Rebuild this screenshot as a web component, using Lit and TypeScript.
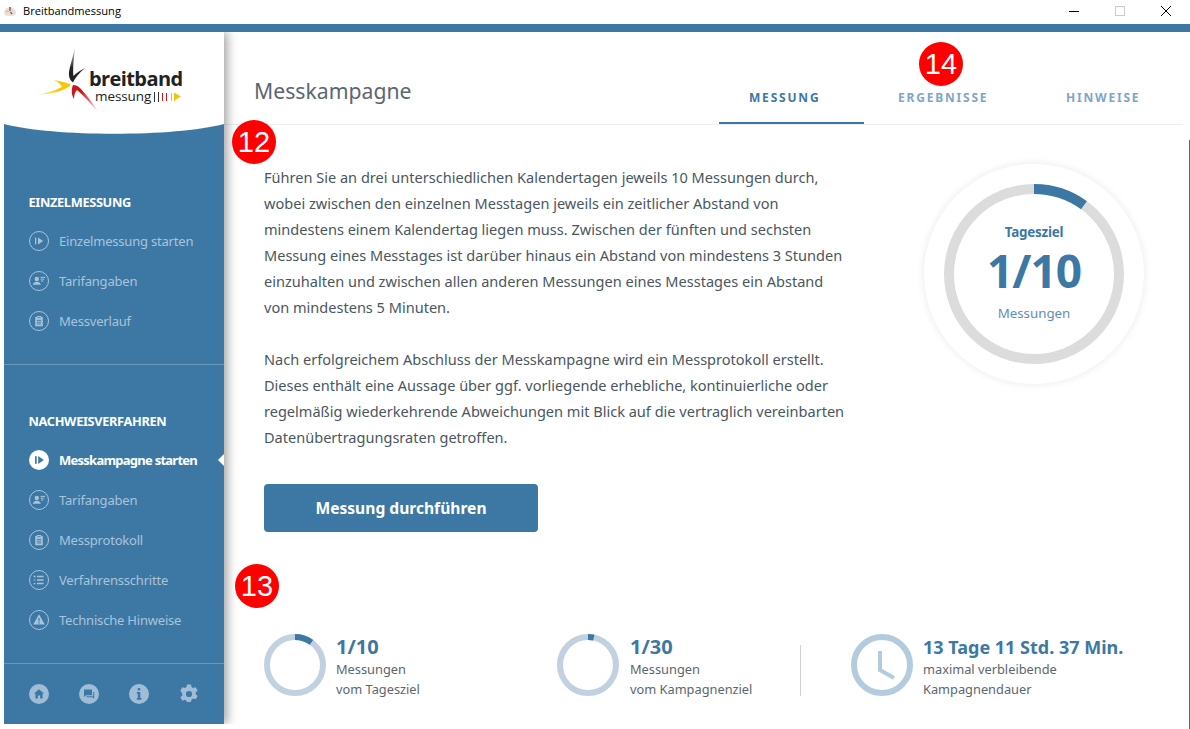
import { LitElement, html, css, svg } from "lit";
import { customElement } from "lit/decorators.js";

const BLUE = "#3d78a5";

function arcPath(cx: number, cy: number, r: number, deg: number) {
  const a = (deg * Math.PI) / 180;
  const x = cx + r * Math.sin(a);
  const y = cy - r * Math.cos(a);
  return `M${cx} ${cy - r}A${r} ${r} 0 0 1 ${x.toFixed(2)} ${y.toFixed(2)}`;
}

const iconPlay = (active = false) => html`<svg class="ico" viewBox="0 0 20 20">
  ${active
    ? svg`<circle cx="10" cy="10" r="10" fill="#fff"/><rect x="6" y="6.2" width="1.7" height="7.6" fill="${BLUE}"/><path d="M9.2 6l5.6 4-5.6 4z" fill="${BLUE}"/>`
    : svg`<circle cx="10" cy="10" r="9.5" fill="none" stroke="#a9c4da" stroke-width="1"/><rect x="6" y="6.6" width="1.3" height="6.8" fill="#a9c4da"/><path d="M9 6.4l5.2 3.6L9 13.6z" fill="#a9c4da"/>`}
</svg>`;

const iconPerson = html`<svg class="ico" viewBox="0 0 20 20">
  <circle cx="10" cy="10" r="9.5" fill="none" stroke="#a9c4da" stroke-width="1"/>
  <circle cx="7.8" cy="8" r="2.2" fill="#a9c4da"/>
  <path d="M3.8 13.8c.4-2 2-3 4-3s3.6 1 4 3z" fill="#a9c4da"/>
  <path d="M11.6 6.4h4.6M11.6 8.2h3.6M12 10h2.4" stroke="#a9c4da" stroke-width="1" fill="none"/>
</svg>`;

const iconClip = html`<svg class="ico" viewBox="0 0 20 20">
  <circle cx="10" cy="10" r="9.5" fill="none" stroke="#a9c4da" stroke-width="1"/>
  <path d="M6.2 6h1.6V5h4.4v1h1.6v9.2H6.2z" fill="#a9c4da"/>
  <path d="M7.8 9.4h4.4M7.8 11.2h4.4M7.8 13h4.4" stroke="${BLUE}" stroke-width=".9"/>
  <path d="M8.4 6.6h3.2" stroke="${BLUE}" stroke-width=".8"/>
</svg>`;

const iconList = html`<svg class="ico" viewBox="0 0 20 20">
  <circle cx="10" cy="10" r="9.5" fill="none" stroke="#a9c4da" stroke-width="1"/>
  <path d="M8 6.4h6.6M8 10h6.6M8 13.6h6.6" stroke="#a9c4da" stroke-width="1.5"/>
  <circle cx="5.6" cy="6.4" r="1" fill="#a9c4da"/>
  <path d="M4.7 9.4h1.7v1.2H4.7zM4.7 13h1.7v1.2H4.7z" fill="#a9c4da"/>
</svg>`;

const iconWarn = html`<svg class="ico" viewBox="0 0 20 20">
  <circle cx="10" cy="10" r="9.5" fill="none" stroke="#a9c4da" stroke-width="1"/>
  <path d="M10 4.2l5.8 10.4H4.2z" fill="#a9c4da"/>
  <path d="M9.3 8h1.4l-.2 3.6h-1zM9.3 12.2h1.4v1.3H9.3z" fill="${BLUE}"/>
</svg>`;

const footHome = html`<svg class="fico" viewBox="0 0 20 20">
  <circle cx="10" cy="10" r="10" fill="#9fbdd6"/>
  <path d="M10 5.2l5 4.4h-1.4v5h-2.5v-3H8.9v3H6.400v-5H5z" fill="${BLUE}"/>
</svg>`;
const footChat = html`<svg class="fico" viewBox="0 0 20 20">
  <circle cx="10" cy="10" r="10" fill="#9fbdd6"/>
  <path d="M5 5.4h8v5.8H7L5 13z" fill="${BLUE}"/>
  <path d="M14.2 8h1v6.8l-1.8-1.6H7.6v-1h6.6z" fill="${BLUE}"/>
</svg>`;
const footInfo = html`<svg class="fico" viewBox="0 0 20 20">
  <circle cx="10" cy="10" r="10" fill="#9fbdd6"/>
  <rect x="8.7" y="4" width="2.6" height="2.6" rx=".6" fill="${BLUE}"/>
  <path d="M7.8 8h3.500v6h1.100v1.800H7.800V14h1V9.800h-1z" fill="${BLUE}"/>
</svg>`;
const footGear = html`<svg class="fico" viewBox="0 0 24 24">
  <path fill-rule="evenodd" fill="#9fbdd6" d="M9.600 0.600h4.800l.6 3.100c.7.3 1.400.6 2 1.100l3-1 2.400 4.100-2.400 2.100c.1.7.1 1.500 0 2.200l2.400 2.100-2.400 4.100-3-1c-.6.5-1.300.8-2 1.100l-.6 3.100H9.600L9 20.100c-.7-.3-1.400-.6-2-1.100l-3 1-2.400-4.100 2.400-2.100c-.1-.7-.1-1.500 0-2.200L1.600 7.900 4 3.800l3 1c.6-.5 1.300-.8 2-1.100zM12 8.300a3.700 3.700 0 1 0 0 7.400 3.700 3.700 0 0 0 0-7.400z"/>
</svg>`;

@customElement("app-root")
export class AppRoot extends LitElement {
  static styles = css`
    :host {
      display: block;
      width: 1190px;
      height: 729px;
      background: #fff;
      overflow: hidden;
      font-family: "Noto Sans", "Open Sans", sans-serif;
      position: relative;
    }
    .titlebar {
      height: 24px;
      display: flex;
      align-items: center;
      background: #fff;
    }
    .appicon { width: 14px; height: 14px; margin: 0 0 3px 3px; }
    .apptitle {
      margin: 0 0 3px 6px;
      font: 11.100px "Open Sans", sans-serif;
      color: #000;
    }
    .winctl { margin-left: auto; display: flex; height: 24px; }
    .winctl svg { display: block; }
    .band { height: 8px; background: #3d78a5; }
    .app { display: flex; height: 692px; padding-left: 4px; }
    .side {
      width: 220px;
      flex: none;
      background: #3d78a5;
      display: flex;
      flex-direction: column;
      box-shadow: 3px 0 10px rgba(0, 0, 0, 0.38);
      clip-path: inset(0 -20px 0 0);
      position: relative;
      z-index: 2;
    }
    .logo {
      height: 92px;
      background: #fff;
      position: relative;
    }
    .curve { display: block; width: 220px; height: 11px; }
    .section { padding-left: 25px; }
    .s1 { height: 230px; padding-top: 57px; box-sizing: border-box; border-bottom: 1px solid #6a97ba; }
    .s2 { height: 299px; padding-top: 46px; box-sizing: border-box; border-bottom: 1px solid #6a97ba; }
    .shead {
      color: #fff;
      font-weight: 700;
      font-size: 12.800px;
      line-height: 20px;
      letter-spacing: -0.35px;
      margin-bottom: 9px;
      margin-left: -0.5px;
    }
    .item {
      height: 40px;
      display: flex;
      align-items: center;
      gap: 10px;
      color: #a9c4da;
      font-size: 13px;
      letter-spacing: -0.2px;
      position: relative;
    }
    .item.active { color: #fff; font-weight: 700; letter-spacing: -0.75px; }
    .item.active::after {
      content: "";
      position: absolute;
      right: 0;
      top: 14px;
      border: 6px solid transparent;
      border-left-width: 0;
      border-right: 6px solid #fff;
    }
    .ico { width: 20px; height: 20px; flex: none; }
    .foot {
      display: flex;
      gap: 30px;
      padding: 20px 0 0 25px;
    }
    .fico { width: 20px; height: 20px; display: block; }
    .main { flex: 1; min-width: 0; }
    .head {
      height: 93px;
      width: 959px;
      box-sizing: border-box;
      padding-left: 30px;
      display: flex;
      align-items: flex-end;
      border-bottom: 1px solid #eceff1;
    }
    .head h1 {
      flex: 1;
      margin: 0 0 17px;
      font-size: 21.200px;
      font-weight: 400;
      line-height: 32px;
      color: #5b6670;
    }
    .tabs {
      flex: none;
      display: grid;
      grid-template-columns: 145px 164px 147px;
      column-gap: 4px;
    }
    .tab {
      height: 50px;
      box-sizing: border-box;
      padding: 15px 0 0 30px;
      font-size: 12px;
      font-weight: 700;
      letter-spacing: 1.800px;
      line-height: 18px;
      color: #7ea6c6;
      border-bottom: 2px solid transparent;
      white-space: nowrap;
    }
    .tab.on { color: #3d78a5; border-bottom-color: #3d78a5; }
    .body {
      display: flex;
      justify-content: space-between;
      padding: 39px 0 0 40px;
      height: 509px;
      box-sizing: border-box;
    }
    .text p {
      margin: 0 0 25px;
      font-size: 14.550px;
      line-height: 26.100px;
      color: #4a5660;
      white-space: nowrap;
    }
    .btn {
      margin-top: 34px;
      width: 274px;
      height: 48px;
      border-radius: 4px;
      background: #3d78a5;
      color: #fff;
      font-weight: 700;
      font-size: 15.600px;
      display: flex;
      align-items: center;
      justify-content: center;
    }
    .goal {
      flex: none;
      width: 220px;
      height: 220px;
      box-sizing: border-box;
      padding-top: 2px;
      margin: 0 46px 0 0;
      border-radius: 50%;
      box-shadow: 0 0 8px rgba(0, 0, 0, 0.09);
      display: flex;
      flex-direction: column;
      align-items: center;
      justify-content: center;
      position: relative;
    }
    .goal svg { position: absolute; inset: 20px; width: 180px; height: 180px; }
    .g1 { font-size: 13.400px; font-weight: 700; color: #3d78a5; line-height: 20px; letter-spacing: -0.2px; }
    .g2 { font-size: 46px; font-weight: 700; color: #3d78a5; line-height: 56px; letter-spacing: -1px; }
    .g3 { font-size: 13.300px; color: #5f90b8; line-height: 30px; }
    .stats {
      padding-left: 40px;
      display: grid;
      grid-template-columns: 293px 243px 51px auto;
    }
    .stat { display: flex; gap: 10px; height: 62px; }
    .stat.mid { gap: 11px; }
    .stat svg { width: 62px; height: 62px; flex: none; }
    .num {
      font-size: 18px;
      font-weight: 700;
      color: #3d78a5;
      line-height: 20px;
      margin: 3px 0 2px;
      white-space: nowrap;
    }
    .num.big { font-size: 20px; }
    .lbl {
      font-size: 12.800px;
      color: #5b6670;
      line-height: 20px;
      white-space: nowrap;
    }
    .sep { width: 1px; height: 51px; background: #cfd3d6; margin-top: 11px; }
    .edge {
      position: absolute;
      right: 0;
      top: 140px;
      bottom: 0;
      width: 1px;
      background: #666;
    }
    .marker {
      position: absolute;
      width: 44px;
      height: 44px;
      border-radius: 50%;
      background: #ff0000;
      color: #fff;
      font: 29px/44px "Liberation Sans", Arial, sans-serif;
      text-align: center;
      z-index: 5;
    }
    .m12 { left: 232px; top: 120px; }
    .m13 { left: 235px; top: 564px; }
    .m14 { left: 919px; top: 42px; }
    .brand {
      position: absolute;
      left: 85px;
      top: 37px;
      font: 700 20px/20px "Open Sans", sans-serif;
      color: #222;
      letter-spacing: -0.6px;
    }
    .brand2 {
      position: absolute;
      left: 91px;
      top: 57px;
      font: 400 13.500px/14px "Open Sans", sans-serif;
      color: #222;
      letter-spacing: -0.1px;
    }
    .logomark { position: absolute; left: 0; top: 0; width: 220px; height: 92px; }
  `;

  render() {
    const ringSm = (deg: number) => html`<svg viewBox="0 0 62 62">
      <circle cx="31" cy="31" r="28" fill="none" stroke="#c1d1df" stroke-width="6"/>
      <path d="${arcPath(31, 31, 28, deg)}" fill="none" stroke="#3d78a5" stroke-width="6"/>
    </svg>`;
    return html`
      <div class="titlebar">
        <svg class="appicon" viewBox="0 0 14 14">
          <path d="M1 9a6 6 0 0 1 12 0c0 2-2 3-6 3s-6-1-6-3z" fill="#e4e0da"/>
          <path d="M7 3v4" stroke="#333" stroke-width="1"/>
          <path d="M3 7.500h3" stroke="#f4c20d" stroke-width="1.200"/>
          <path d="M7.500 8l1.500 2" stroke="#c8171d" stroke-width="1.200"/>
        </svg>
        <span class="apptitle">Breitbandmessung</span>
        <div class="winctl">
          <svg width="130" height="24" viewBox="0 0 130 24">
            <path d="M9 11.500h10" stroke="#000" stroke-width="1"/>
            <rect x="55.500" y="6.500" width="9" height="9" fill="none" stroke="#ccc"/>
            <path d="M101 6l10 10M111 6l-10 10" stroke="#000" stroke-width="1" fill="none"/>
          </svg>
        </div>
      </div>
      <div class="band"></div>
      <div class="app">
        <aside class="side">
          <div class="logo">
            <svg class="logomark" viewBox="0 0 220 92">
              <defs>
                <linearGradient id="gk" x1="0" y1="0" x2="0" y2="1"><stop offset="0" stop-color="#ddd"/><stop offset="0.6" stop-color="#222"/></linearGradient>
                <linearGradient id="gy" x1="0" y1="0" x2="1" y2="0"><stop offset="0" stop-color="#fff3b0"/><stop offset="0.7" stop-color="#fbc400"/></linearGradient>
                <linearGradient id="gr" x1="1" y1="1" x2="0" y2="0"><stop offset="0" stop-color="#fbe0e0"/><stop offset="0.7" stop-color="#c8171d"/></linearGradient>
              </defs>
              <path d="M71 15C69 25 66 33 65 40C64.500 45 66 48 69 50.500C71 46 75 41 81 36C76 39 72 41 69.500 44C68.500 38 70 25 71 15z" fill="url(#gk)"/>
              <path d="M33 63C45 62 58 60 66 54L66 52C61 50 55 49 50 48C54 50 57 52 58 55C50 59 42 61 33 63z" fill="url(#gy)"/>
              <path d="M69 53C67 58 67.500 63 70 67C70 63 71 60 73 58C80 64 87 72 94 80C88 70 82 62 76 56C74 54 72 53 69 53z" fill="url(#gr)"/>
              <path d="M150.500 60v10M154.500 60v10" stroke="#333" stroke-width="1"/>
              <path d="M158.500 61v8M162.500 61v8" stroke="#c8171d" stroke-width="1"/>
              <path d="M167.500 61v8M170.500 61v8" stroke="#f4c20d" stroke-width="1"/>
              <path d="M171 61l6 3.500-6 3.500z" fill="#f4c20d"/>
            </svg>
            <div class="brand">breitband</div>
            <div class="brand2">messung</div>
          </div>
          <svg class="curve" viewBox="0 0 220 11" preserveAspectRatio="none"><path d="M0 0h220C170 13 50 13 0 0z" fill="#fff"/></svg>
          <div class="section s1">
            <div class="shead">EINZELMESSUNG</div>
            <div class="item">${iconPlay()}<span>Einzelmessung starten</span></div>
            <div class="item">${iconPerson}<span>Tarifangaben</span></div>
            <div class="item">${iconClip}<span>Messverlauf</span></div>
          </div>
          <div class="section s2">
            <div class="shead">NACHWEISVERFAHREN</div>
            <div class="item active">${iconPlay(true)}<span>Messkampagne starten</span></div>
            <div class="item">${iconPerson}<span>Tarifangaben</span></div>
            <div class="item">${iconClip}<span>Messprotokoll</span></div>
            <div class="item">${iconList}<span>Verfahrensschritte</span></div>
            <div class="item">${iconWarn}<span>Technische Hinweise</span></div>
          </div>
          <div class="foot">${footHome}${footChat}${footInfo}${footGear}</div>
        </aside>
        <main class="main">
          <header class="head">
            <h1>Messkampagne</h1>
            <nav class="tabs">
              <div class="tab on">MESSUNG</div>
              <div class="tab">ERGEBNISSE</div>
              <div class="tab">HINWEISE</div>
            </nav>
          </header>
          <section class="body">
            <div class="text">
              <p>Führen Sie an drei unterschiedlichen Kalendertagen jeweils 10 Messungen durch,<br>wobei zwischen den einzelnen Messtagen jeweils ein zeitlicher Abstand von<br>mindestens einem Kalendertag liegen muss. Zwischen der fünften und sechsten<br>Messung eines Messtages ist darüber hinaus ein Abstand von mindestens 3 Stunden<br>einzuhalten und zwischen allen anderen Messungen eines Messtages ein Abstand<br>von mindestens 5 Minuten.</p>
              <p>Nach erfolgreichem Abschluss der Messkampagne wird ein Messprotokoll erstellt.<br>Dieses enthält eine Aussage über ggf. vorliegende erhebliche, kontinuierliche oder<br>regelmäßig wiederkehrende Abweichungen mit Blick auf die vertraglich vereinbarten<br>Datenübertragungsraten getroffen.</p>
              <div class="btn">Messung durchführen</div>
            </div>
            <div class="goal">
              <svg viewBox="0 0 180 180">
                <circle cx="90" cy="90" r="85" fill="none" stroke="#dcdcdc" stroke-width="10"/>
                <path d="${arcPath(90, 90, 85, 36)}" fill="none" stroke="#3d78a5" stroke-width="10"/>
              </svg>
              <div class="g1">Tagesziel</div>
              <div class="g2">1/10</div>
              <div class="g3">Messungen</div>
            </div>
          </section>
          <div class="stats">
            <div class="stat">${ringSm(36)}<div><div class="num big">1/10</div><div class="lbl">Messungen</div><div class="lbl">vom Tagesziel</div></div></div>
            <div class="stat mid">${ringSm(12)}<div><div class="num big">1/30</div><div class="lbl">Messungen</div><div class="lbl">vom Kampagnenziel</div></div></div>
            <div><div class="sep"></div></div>
            <div class="stat">
              <svg viewBox="0 0 62 62">
                <circle cx="31" cy="31" r="28" fill="none" stroke="#b3cbde" stroke-width="6"/>
                <path d="M29 17v19l14 8" fill="none" stroke="#b3cbde" stroke-width="4"/>
              </svg>
              <div><div class="num">13 Tage 11 Std. 37 Min.</div><div class="lbl">maximal verbleibende</div><div class="lbl">Kampagnendauer</div></div>
            </div>
          </div>
        </main>
      </div>
      <div class="edge"></div>
      <div class="marker m12">12</div>
      <div class="marker m13">13</div>
      <div class="marker m14">14</div>
    `;
  }
}
